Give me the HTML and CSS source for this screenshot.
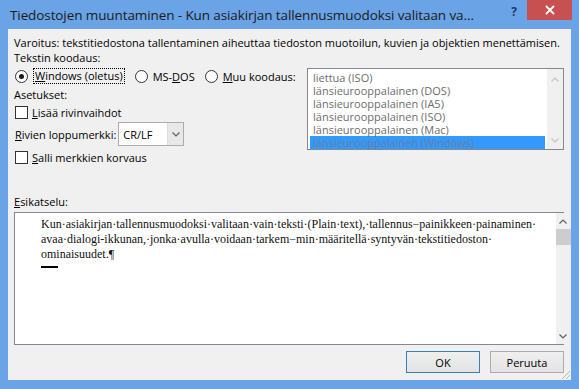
FILE: index.html
```html
<!DOCTYPE html>
<html lang="fi">
  <head>
    <meta charset="UTF-8" />
    <title>Tiedostojen muuntaminen</title>
    <link rel="stylesheet" href="styles.css">
  </head>
  <body>
    <div class="window">
      <!-- title bar -->
      <div class="titlebar">
        <span class="title">Tiedostojen muuntaminen - Kun asiakirjan tallennusmuodoksi valitaan va...</span>
        <span class="help">?</span>
        <span class="close">
          <svg width="10" height="10" viewBox="0 0 10 10"><path d="M1 1 L9 9 M9 1 L1 9" stroke="#fff" stroke-width="1.8"/></svg>
        </span>
      </div>

      <div class="client">
        <div class="warning">Varoitus: tekstitiedostona tallentaminen aiheuttaa tiedoston muotoilun, kuvien ja objektien menettämisen.</div>

        <div class="encoding">
          <div class="options">
            <div class="label">Tekstin koodaus:</div>
            <div class="radios">
              <span class="radio checked"></span>
              <span class="focus"><u>W</u>indows (oletus)</span>
              <span class="radio"></span>
              <span>MS-<u>D</u>OS</span>
              <span class="radio"></span>
              <span><u>M</u>uu koodaus:</span>
            </div>
            <div class="label">Asetukset:</div>
            <div class="check-row"><span class="box"></span><span><u>L</u>isää rivinvaihdot</span></div>
            <div class="eol-row">
              <span><u>R</u>ivien loppumerkki:</span>
              <div class="combo">
                <span class="combo-value">CR/LF</span>
                <span class="combo-btn">
                  <svg width="8" height="5" viewBox="0 0 8 5"><path d="M0.5 0.5 L4 4 L7.5 0.5" fill="none" stroke="#606060" stroke-width="1.2"/></svg>
                </span>
              </div>
            </div>
            <div class="check-row"><span class="box"></span><span><u>S</u>alli merkkien korvaus</span></div>
          </div>

          <div class="listbox">
            <div class="items">
              <div class="item">liettua (ISO)</div>
              <div class="item">länsieurooppalainen (DOS)</div>
              <div class="item">länsieurooppalainen (IA5)</div>
              <div class="item">länsieurooppalainen (ISO)</div>
              <div class="item">länsieurooppalainen (Mac)</div>
              <div class="item selected">länsieurooppalainen (Windows)</div>
            </div>
            <div class="scroll">
              <svg width="8" height="5" viewBox="0 0 8 5"><path d="M0.5 4.5 L4 1 L7.5 4.5" fill="none" stroke="#c4c4c4" stroke-width="1.2"/></svg>
              <svg width="8" height="5" viewBox="0 0 8 5"><path d="M0.5 0.5 L4 4 L7.5 0.5" fill="none" stroke="#c4c4c4" stroke-width="1.2"/></svg>
            </div>
          </div>
        </div>

        <div class="label preview-label"><u>E</u>sikatselu:</div>
        <div class="preview">
          <div class="page">
            <p>Kun·asiakirjan·tallennusmuodoksi·valitaan·vain·teksti·(Plain·text),·tallennus−painikkeen·painaminen·<br>avaa·dialogi-ikkunan,·jonka·avulla·voidaan·tarkem−min·määritellä·syntyvän·tekstitiedoston·<br>ominaisuudet.¶</p>
            <div class="end-mark"></div>
          </div>
          <div class="vscroll">
            <svg width="8" height="5" viewBox="0 0 8 5"><path d="M0.5 4.5 L4 1 L7.5 4.5" fill="none" stroke="#606060" stroke-width="1.2"/></svg>
            <div class="thumb"></div>
            <div class="track"></div>
            <svg width="8" height="5" viewBox="0 0 8 5"><path d="M0.5 0.5 L4 4 L7.5 0.5" fill="none" stroke="#606060" stroke-width="1.2"/></svg>
          </div>
        </div>

        <div class="buttons">
          <button class="btn default">OK</button>
          <button class="btn">Peruuta</button>
        </div>
        <div class="grip"></div>
      </div>
    </div>
  </body>
</html>
```

FILE: styles.css
```css
body {
  margin: 0;
  font-family: "Open Sans", "Noto Sans", sans-serif;
  font-size: 11px;
  color: #000;
  overflow: hidden;
}

.window {
  width: 579px;
  height: 389px;
  box-sizing: border-box;
  background: #6aa4e6;
  padding: 0 8px 9px 8px;
  display: flex;
  flex-direction: column;
}

/* title bar */
.titlebar {
  height: 30px;
  display: flex;
  align-items: flex-start;
  position: relative;
}
.title {
  font-size: 13.5px;
  color: #1a1a1a;
  margin: 6px 0 0 2px;
  white-space: nowrap;
  letter-spacing: -0.1px;
}
.help {
  font-family: "Open Sans", sans-serif;
  font-weight: bold;
  font-size: 12px;
  color: #1c3a66;
  margin: 3px 0 0 auto;
}
.close {
  width: 45px;
  height: 20px;
  background: #c75050;
  margin-left: 10px;
  margin-right: -1px;
  display: flex;
  align-items: center;
  justify-content: center;
}

/* client area */
.client {
  flex: 1;
  background: #f0f0f0;
  padding: 6px 7px 7px 6px;
  display: flex;
  flex-direction: column;
  position: relative;
}
.warning {
  line-height: 15px;
  white-space: nowrap;
}
.label {
  line-height: 15px;
}

.encoding {
  display: flex;
}
.options {
  width: 293px;
}
.radios {
  display: flex;
  align-items: center;
  height: 16px;
  margin: 3px 0 3px 1px;
}
.radios span {
  margin-right: 5px;
}
.radio {
  width: 11px;
  height: 11px;
  border: 1px solid #333;
  border-radius: 50%;
  background: #fff;
  position: relative;
  flex: none;
}
.radios .radio + span {
  margin-right: 10px;
}
.radio.checked::after {
  content: "";
  position: absolute;
  left: 3px;
  top: 3px;
  width: 5px;
  height: 5px;
  border-radius: 50%;
  background: #1a1a1a;
}
.focus {
  border: 1px dotted #000;
  padding: 0 1px;
  line-height: 14px;
}

.check-row {
  display: flex;
  align-items: center;
  gap: 4px;
  height: 16px;
  margin: 2px 0 0 1px;
}
.box {
  width: 11px;
  height: 11px;
  border: 1px solid #333;
  background: #fff;
}

.eol-row {
  display: flex;
  align-items: center;
  gap: 2px;
  margin: 2px 0 3px 1px;
}
.combo {
  width: 64px;
  height: 22px;
  border: 1px solid #acacac;
  background: #fff;
  display: flex;
  align-items: center;
}
.combo-value {
  flex: 1;
  padding-left: 4px;
}
.combo-btn {
  width: 15px;
  height: 22px;
  background: #e8e8e8;
  border-left: 1px solid #dcdcdc;
  display: flex;
  align-items: center;
  justify-content: center;
}

.listbox {
  margin-top: 18px;
  width: 255px;
  height: 80px;
  border: 1px solid #828790;
  background: #fff;
  display: flex;
}
.items {
  flex: 1;
  padding: 2px 2px 0 2px;
}
.item {
  height: 13px;
  line-height: 13px;
  padding-left: 3px;
  color: #6d6d6d;
  white-space: nowrap;
}
.item.selected {
  background: #3399ff;
  color: #6a7f97;
}
.scroll {
  width: 16px;
  background: #f0f0f0;
  display: flex;
  flex-direction: column;
  align-items: center;
  justify-content: space-between;
  padding: 8px 0 6px;
}

.preview-label {
  margin-top: 29px;
}
.preview {
  margin-top: 3px;
  height: 131px;
  border: 1px solid #828790;
  background: #fff;
  display: flex;
}
.page {
  flex: 1;
  padding: 4px 20px 0 26px;
  font-family: "Liberation Serif", serif;
  font-size: 12px;
  color: #111;
  white-space: nowrap;
}
.page p {
  margin: 0;
  line-height: 15px;
}
.end-mark {
  width: 17px;
  height: 2px;
  background: #000;
  margin-top: 4px;
}
.vscroll {
  width: 17px;
  background: #f0f0f0;
  display: flex;
  flex-direction: column;
  align-items: center;
  padding: 6px 0 5px;
}
.thumb {
  width: 15px;
  height: 16px;
  background: #cdcdcd;
  margin-top: 5px;
}
.track {
  flex: 1;
}

.buttons {
  display: flex;
  justify-content: flex-end;
  gap: 10px;
  margin-top: 6px;
}
.btn {
  width: 74px;
  height: 22px;
  font-family: "Open Sans", sans-serif;
  font-size: 11px;
  background: linear-gradient(#efefef, #e3e3e3);
  border: 1px solid #acacac;
  padding: 0;
  color: #000;
}
.btn.default {
  border-color: #3c7fb1;
}

/* resize grip */
.grip {
  position: absolute;
  right: 1px;
  bottom: 1px;
  width: 10px;
  height: 10px;
  background: repeating-linear-gradient(135deg, transparent 0 2px, #b8b8b8 2px 3px);
  clip-path: polygon(100% 0, 100% 100%, 0 100%);
}
```
